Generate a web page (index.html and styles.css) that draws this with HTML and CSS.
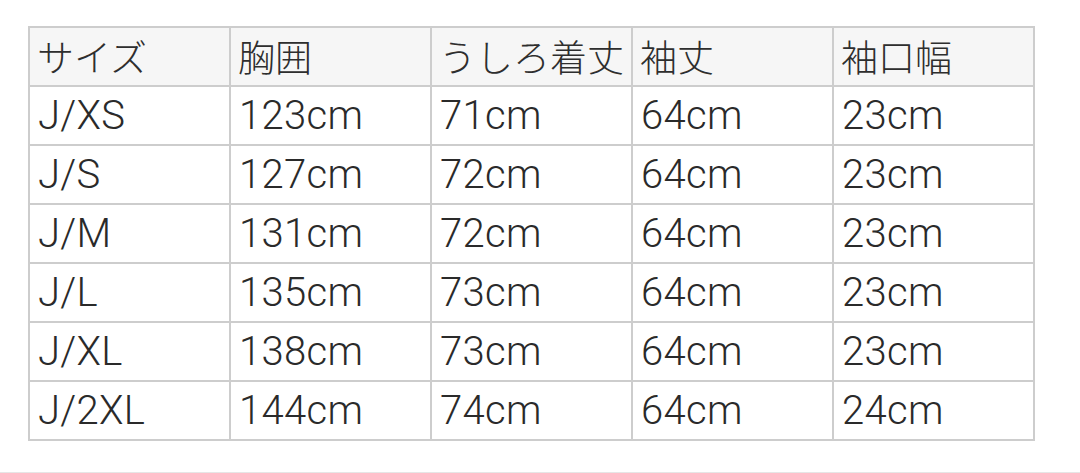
FILE: index.html
```html
<!DOCTYPE html>
<html lang="ja">
<head>
<meta charset="utf-8">
<link rel="stylesheet" href="styles.css">
</head>
<body>
<div class="page">
  <table class="size-table">
    <colgroup>
      <col class="c"><col class="c"><col class="c"><col class="c"><col class="c">
    </colgroup>
    <thead>
      <tr><th>サイズ</th><th>胸囲</th><th>うしろ着丈</th><th>袖丈</th><th>袖口幅</th></tr>
    </thead>
    <tbody>
      <tr><td>J/XS</td><td>123cm</td><td>71cm</td><td>64cm</td><td>23cm</td></tr>
      <tr><td>J/S</td><td>127cm</td><td>72cm</td><td>64cm</td><td>23cm</td></tr>
      <tr><td>J/M</td><td>131cm</td><td>72cm</td><td>64cm</td><td>23cm</td></tr>
      <tr><td>J/L</td><td>135cm</td><td>73cm</td><td>64cm</td><td>23cm</td></tr>
      <tr><td>J/XL</td><td>138cm</td><td>73cm</td><td>64cm</td><td>23cm</td></tr>
      <tr><td>J/2XL</td><td>144cm</td><td>74cm</td><td>64cm</td><td>24cm</td></tr>
    </tbody>
  </table>
  <div class="rule"></div>
</div>
</body>
</html>
```
FILE: styles.css
```css
html, body {
  margin: 0;
  padding: 0;
  background: #ffffff;
}
.page {
  width: 1080px;
  height: 473px;
  padding-top: 26px;
  box-sizing: border-box;
  font-family: Roboto, "Noto Sans CJK JP", sans-serif;
  color: #333333;
}
.size-table {
  margin-left: 28px;
  border-collapse: collapse;
  table-layout: fixed;
  width: 1007px;
  border: 2px solid #cdcdcd;
}
.size-table .c {
  width: 201px;
}
.size-table th,
.size-table td {
  border: 2px solid #cdcdcd;
  height: 57px;
  padding: 0 0 0 8px;
  line-height: 57px;
  text-align: left;
  white-space: nowrap;
  overflow: hidden;
  vertical-align: middle;
}
.size-table td {
  font-size: 40px;
  font-weight: 300;
  letter-spacing: 0.3px;
  color: #2a2a2a;
}
.size-table th {
  background: #f6f6f6;
  font-family: "Noto Sans CJK JP", sans-serif;
  font-size: 37px;
  font-weight: 300;
  color: #2e2e2e;
  padding-left: 7px;
}
.rule {
  margin-top: 31px;
  height: 1px;
  background: #e6e6e6;
}
```
